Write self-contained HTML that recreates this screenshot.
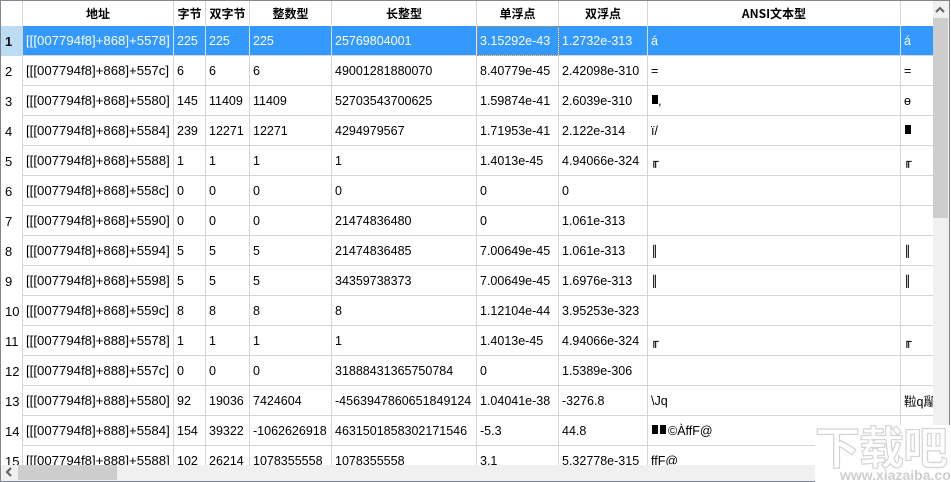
<!DOCTYPE html>
<html><head><meta charset="utf-8"><style>
html,body{margin:0;padding:0;width:951px;height:482px;overflow:hidden;background:#fff}
*{box-sizing:border-box}
#f{position:absolute;left:0;top:0;width:950px;height:482px;border:1px solid #82878f;background:#f0f0f0}
#c{position:absolute;left:0;top:0;width:932px;height:464px;overflow:hidden;background:#fff}
table{border-collapse:separate;border-spacing:0;table-layout:fixed;width:932px;font:12.5px "Liberation Sans","Noto Sans CJK SC",sans-serif;color:#000}
th{height:25px;background:#fff;border-right:1px solid #d6d6d6;font:bold 12px "Noto Sans CJK SC",sans-serif;padding:0;color:#000;text-align:center;line-height:24px;overflow:hidden;white-space:nowrap}
td{height:30px;padding:0 0 0 3px;border-right:1px solid #d6d6d6;border-bottom:1px solid #d6d6d6;white-space:nowrap;overflow:hidden}
td:first-child{border-right:1px solid #d6d6d6;border-bottom:0;padding-left:4px;font-size:13px;background:#fff}
td:nth-child(2){font-size:13.2px}
tr td:last-child,tr th:last-child{border-right:0}
tr.s td{background:#3399ff;color:#fff;border-right-color:#d8e6f4;border-bottom-color:#d6d6d6}
tr.s td:first-child{background:#bcdcf4;color:#111;font-weight:bold;border-right-color:#d6d6d6}
tr.s td.k{outline:1px dotted #d08a30;outline-offset:-1px}
i{display:inline-block;width:6px;height:9px;background:#000;margin-right:2px;vertical-align:1px}
b{display:inline-block;font-weight:normal;margin-left:0;width:6px;transform:scale(.85,.85);transform-origin:0 50%;-webkit-text-stroke:.3px #000}
u{display:inline-block;text-decoration:none;font-weight:normal;margin-left:0;width:6px;transform:scale(.8,.85);transform-origin:0 50%;-webkit-text-stroke:.3px #000}
#vt{position:absolute;left:932px;top:17px;width:15px;height:200px;background:#cdcdcd}
#h{position:absolute;left:17px;top:464px;width:99px;height:15px;background:#cdcdcd}
svg.a{position:absolute}
#w{position:absolute;left:815px;top:425px;width:136px;height:57px;background:#fff;overflow:hidden}
#w div{position:absolute;left:0;top:-10px;font:bold 45px/60px "Noto Sans CJK SC",sans-serif;color:#fff;-webkit-text-stroke:1.2px #d4d4d4;white-space:nowrap;letter-spacing:-1px}
#w span{position:absolute;left:25px;top:44px;font:bold 14px/13px "Liberation Sans",sans-serif;color:#cfcfcf;white-space:nowrap}
</style></head><body>
<div id="f">
<div id="c"><table>
<colgroup><col style="width:22px"><col style="width:151px"><col style="width:32px"><col style="width:44px"><col style="width:82px"><col style="width:145px"><col style="width:82px"><col style="width:89px"><col style="width:253px"><col style="width:32px"></colgroup>
<tr><th></th><th>地址</th><th>字节</th><th>双字节</th><th>整数型</th><th>长整型</th><th>单浮点</th><th>双浮点</th><th>ANSI文本型</th><th></th></tr>
<tr class="s"><td>1</td><td>[[[007794f8]+868]+5578]</td><td>225</td><td>225</td><td>225</td><td>25769804001</td><td class="k">3.15292e-43</td><td>1.2732e-313</td><td>á</td><td>á</td></tr>
<tr><td>2</td><td>[[[007794f8]+868]+557c]</td><td>6</td><td>6</td><td>6</td><td>49001281880070</td><td>8.40779e-45</td><td>2.42098e-310</td><td>=</td><td>=</td></tr>
<tr><td>3</td><td>[[[007794f8]+868]+5580]</td><td>145</td><td>11409</td><td>11409</td><td>52703543700625</td><td>1.59874e-41</td><td>2.6039e-310</td><td><i style="margin-right:0;margin-left:1px"></i>,</td><td>ө</td></tr>
<tr><td>4</td><td>[[[007794f8]+868]+5584]</td><td>239</td><td>12271</td><td>12271</td><td>4294979567</td><td>1.71953e-41</td><td>2.122e-314</td><td>ï/</td><td><i style="margin-left:1px"></i></td></tr>
<tr><td>5</td><td>[[[007794f8]+868]+5588]</td><td>1</td><td>1</td><td>1</td><td>1</td><td>1.4013e-45</td><td>4.94066e-324</td><td><b>╓</b></td><td><b>╓</b></td></tr>
<tr><td>6</td><td>[[[007794f8]+868]+558c]</td><td>0</td><td>0</td><td>0</td><td>0</td><td>0</td><td>0</td><td></td><td></td></tr>
<tr><td>7</td><td>[[[007794f8]+868]+5590]</td><td>0</td><td>0</td><td>0</td><td>21474836480</td><td>0</td><td>1.061e-313</td><td></td><td></td></tr>
<tr><td>8</td><td>[[[007794f8]+868]+5594]</td><td>5</td><td>5</td><td>5</td><td>21474836485</td><td>7.00649e-45</td><td>1.061e-313</td><td><u>║</u></td><td><u>║</u></td></tr>
<tr><td>9</td><td>[[[007794f8]+868]+5598]</td><td>5</td><td>5</td><td>5</td><td>34359738373</td><td>7.00649e-45</td><td>1.6976e-313</td><td><u>║</u></td><td><u>║</u></td></tr>
<tr><td>10</td><td>[[[007794f8]+868]+559c]</td><td>8</td><td>8</td><td>8</td><td>8</td><td>1.12104e-44</td><td>3.95253e-323</td><td></td><td></td></tr>
<tr><td>11</td><td>[[[007794f8]+888]+5578]</td><td>1</td><td>1</td><td>1</td><td>1</td><td>1.4013e-45</td><td>4.94066e-324</td><td><b>╓</b></td><td><b>╓</b></td></tr>
<tr><td>12</td><td>[[[007794f8]+888]+557c]</td><td>0</td><td>0</td><td>0</td><td>31888431365750784</td><td>0</td><td>1.5389e-306</td><td></td><td></td></tr>
<tr><td>13</td><td>[[[007794f8]+888]+5580]</td><td>92</td><td>19036</td><td>7424604</td><td>-4563947860651849124</td><td>1.04041e-38</td><td>-3276.8</td><td>\Jq</td><td>鞡q鄬</td></tr>
<tr><td>14</td><td>[[[007794f8]+888]+5584]</td><td>154</td><td>39322</td><td>-1062626918</td><td>4631501858302171546</td><td>-5.3</td><td>44.8</td><td><i style="margin-left:1px"></i><i></i>©ÀffF@</td><td>鞡q鄬</td></tr>
<tr><td>15</td><td>[[[007794f8]+888]+5588]</td><td>102</td><td>26214</td><td>1078355558</td><td>1078355558</td><td>3.1</td><td>5.32778e-315</td><td>ffF@</td><td></td></tr>
</table></div>
<div id="vt"></div>
<div id="h"></div>
<svg class="a" style="left:933px;top:5px" width="12" height="8" viewBox="0 0 12 8"><path d="M2 6 L6 2 L10 6" fill="none" stroke="#606060" stroke-width="2"/></svg>
<svg class="a" style="left:3px;top:465px" width="10" height="12" viewBox="0 0 10 12"><path d="M7 2 L3 6 L7 10" fill="none" stroke="#606060" stroke-width="2"/></svg>
</div>
<div id="w"><div>下载吧</div><span>www.xiazaiba.com</span></div>
</body></html>
